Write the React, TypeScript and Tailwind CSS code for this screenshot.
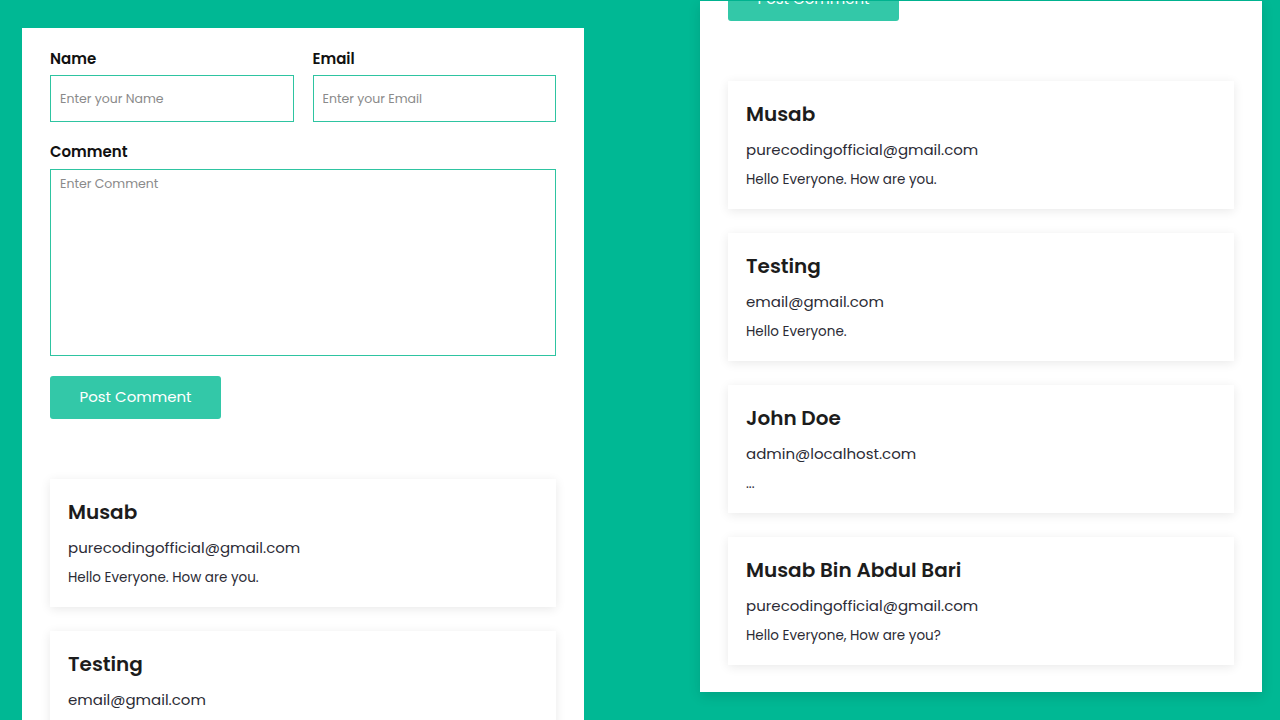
const comments = [
  { name: 'Musab', email: 'purecodingofficial@gmail.com', text: 'Hello Everyone. How are you.' },
  { name: 'Testing', email: 'email@gmail.com', text: 'Hello Everyone.' },
  { name: 'John Doe', email: 'admin@localhost.com', text: '...' },
  { name: 'Musab Bin Abdul Bari', email: 'purecodingofficial@gmail.com', text: 'Hello Everyone, How are you?' },
];

function CommentCard({ name, email, text }: { name: string; email: string; text: string }) {
  return (
    <div className="bg-white px-[18px] pt-[19px] pb-[19px] shadow-[0_2px_10px_rgba(0,0,0,0.09)]">
      <h3 className="text-[20px] leading-[28px] font-semibold text-[#1c1c1c]">{name}</h3>
      <p className="mt-[10px] text-[15px] leading-[24px] text-[#2b2b35]">{email}</p>
      <p className="mt-[8px] text-[13.5px] leading-[20px] text-[#2b2b35]">{text}</p>
    </div>
  );
}

function CommentPage() {
  return (
    <div className="px-[28px] pt-[20px] pb-[28px]">
      <form className="flex flex-col" onSubmit={(e) => e.preventDefault()}>
        <div className="flex gap-[19px]">
          <div className="flex-1">
            <label htmlFor="name" className="block text-[15px] leading-[22px] font-semibold text-[#111] mb-[5px]">
              Name
            </label>
            <input
              id="name"
              type="text"
              placeholder="Enter your Name"
              className="block w-full h-[47px] px-[9px] border border-[#2ec4a1] text-[12.5px] placeholder:text-[#8a8a8a] outline-none"
            />
          </div>
          <div className="flex-1">
            <label htmlFor="email" className="block text-[15px] leading-[22px] font-semibold text-[#111] mb-[5px]">
              Email
            </label>
            <input
              id="email"
              type="email"
              placeholder="Enter your Email"
              className="block w-full h-[47px] px-[9px] border border-[#2ec4a1] text-[12.5px] placeholder:text-[#8a8a8a] outline-none"
            />
          </div>
        </div>

        <label htmlFor="comment" className="block mt-[19px] text-[15px] leading-[22px] font-semibold text-[#111] mb-[6px]">
          Comment
        </label>
        <textarea
          id="comment"
          placeholder="Enter Comment"
          className="block w-full h-[187px] px-[9px] pt-[5px] border border-[#2ec4a1] text-[12.5px] placeholder:text-[#8a8a8a] outline-none resize-none"
        />

        <div className="mt-[20px]">
          <button
            type="submit"
            className="w-[171px] h-[43px] rounded-[3px] bg-[#33c8a8] text-white text-[15px] font-normal"
          >
            Post Comment
          </button>
        </div>
      </form>

      <div className="mt-[60px] flex flex-col gap-[24px]">
        {comments.map((c) => (
          <CommentCard key={c.name} {...c} />
        ))}
      </div>
    </div>
  );
}

export default function App() {
  return (
    <div className="w-[1280px] h-[720px] overflow-hidden bg-[#00b894] flex items-start font-['Poppins','Inter',sans-serif]">
      <div className="ml-[22px] mt-[28px] w-[562px] bg-white shrink-0">
        <CommentPage />
      </div>
      {/* same page, scrolled down */}
      <div className="ml-[116px] mt-[1px] w-[562px] h-[691px] bg-white shrink-0 overflow-hidden shadow-[0_4px_12px_rgba(0,0,0,0.12)]">
        <div className="-mt-[371px]">
          <CommentPage />
        </div>
      </div>
    </div>
  );
}
